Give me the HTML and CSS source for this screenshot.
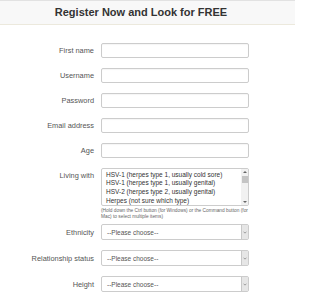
FILE: index.html
```html
<!DOCTYPE html>
<html lang="en">
<head>
<meta charset="utf-8">
<title>Register</title>
<link rel="stylesheet" href="styles.css">
</head>
<body>
<div class="page">
  <header class="head"><h1 class="title">Register Now and Look for FREE</h1></header>
  <form class="form">
    <div class="row"><label class="lbl">First name</label><input class="field" type="text"></div>
    <div class="row"><label class="lbl">Username</label><input class="field" type="text"></div>
    <div class="row"><label class="lbl">Password</label><input class="field" type="password"></div>
    <div class="row"><label class="lbl">Email address</label><input class="field" type="text"></div>
    <div class="row"><label class="lbl">Age</label><input class="field" type="text"></div>
    <div class="row row-top">
      <label class="lbl lbl-top">Living with</label>
      <div class="ctrl">
        <div class="listbox" role="listbox">
          <div class="opts">
            <div class="opt">HSV-1 (herpes type 1, usually cold sore)</div>
            <div class="opt">HSV-1 (herpes type 1, usually genital)</div>
            <div class="opt">HSV-2 (herpes type 2, usually genital)</div>
            <div class="opt">Herpes (not sure which type)</div>
          </div>
          <div class="sbar">
            <span class="sarrow up"></span>
            <span class="sthumb"></span>
            <span class="sfill"></span>
            <span class="sarrow down"></span>
          </div>
        </div>
        <p class="help">(Hold down the Ctrl button (for Windows) or the Command button (for Mac) to select multiple items)</p>
      </div>
    </div>
    <div class="row"><label class="lbl">Ethnicity</label><div class="sel"><span class="sel-text">--Please choose--</span><span class="sel-btn"><svg viewBox="0 0 6 4" width="4" height="3"><path d="M0.8 0.8 L3 3 L5.2 0.8" fill="none" stroke="#777" stroke-width="1"/></svg></span></div></div>
    <div class="row"><label class="lbl">Relationship status</label><div class="sel"><span class="sel-text">--Please choose--</span><span class="sel-btn"><svg viewBox="0 0 6 4" width="4" height="3"><path d="M0.8 0.8 L3 3 L5.2 0.8" fill="none" stroke="#777" stroke-width="1"/></svg></span></div></div>
    <div class="row"><label class="lbl">Height</label><div class="sel"><span class="sel-text">--Please choose--</span><span class="sel-btn"><svg viewBox="0 0 6 4" width="4" height="3"><path d="M0.8 0.8 L3 3 L5.2 0.8" fill="none" stroke="#777" stroke-width="1"/></svg></span></div></div>
  </form>
</div>
</body>
</html>
```

FILE: styles.css
```css
html, body {
  margin: 0;
  padding: 0;
  background: #fff;
  font-family: "Liberation Sans", Arial, sans-serif;
}
.page {
  width: 295px;
}
.head {
  border-top: 1px solid #e2e2e2;
  border-bottom: 1px solid #ece9dd;
  background: #f8f8f8;
  height: 23px;
  padding-right: 13px;
  display: flex;
  align-items: center;
  justify-content: center;
}
.title {
  margin: 0;
  font-size: 11px;
  font-weight: bold;
  color: #333;
  line-height: 13px;
}
.form {
  display: flex;
  flex-direction: column;
  padding-top: 18px;
  gap: 10px;
}
.row {
  display: grid;
  grid-template-columns: 94px 148px;
  column-gap: 7px;
  align-items: center;
}
.row-top {
  align-items: start;
  margin-bottom: -6px;
}
.lbl {
  text-align: right;
  font-size: 7.4px;
  color: #555;
  line-height: 9px;
}
.lbl-top {
  padding-top: 3px;
}
.field {
  box-sizing: border-box;
  height: 15px;
  width: 148px;
  margin: 0;
  border: 1px solid #ccc;
  border-radius: 2px;
  background: #fff;
  padding: 0 4px;
  box-shadow: inset 0 1px 1px rgba(0,0,0,0.04);
}
.ctrl {
  display: flex;
  flex-direction: column;
}
.listbox {
  box-sizing: border-box;
  height: 38px;
  border: 1px solid #ccc;
  border-radius: 2px;
  display: flex;
  overflow: hidden;
}
.opts {
  flex: 1;
  padding: 1.5px 0 0 4px;
}
.opt {
  font-size: 6.5px;
  line-height: 8.7px;
  color: #333;
  white-space: nowrap;
}
.sbar {
  width: 7px;
  background: #f1f1f1;
  display: flex;
  flex-direction: column;
  align-items: center;
}
.sarrow {
  width: 0;
  height: 0;
  border-left: 2px solid transparent;
  border-right: 2px solid transparent;
  margin: 2px 0;
}
.sarrow.up {
  border-bottom: 2px solid #666;
}
.sarrow.down {
  border-top: 2px solid #666;
}
.sthumb {
  width: 6px;
  height: 7px;
  background: #c4c4c4;
  margin-top: 1px;
}
.sfill {
  flex: 1;
}
.help {
  margin: 2px 0 0;
  font-size: 4.8px;
  line-height: 6px;
  color: #666;
}
.sel {
  box-sizing: border-box;
  height: 16px;
  border: 1px solid #ccc;
  border-radius: 2px;
  display: flex;
  align-items: center;
  background: #fff;
}
.sel-text {
  flex: 1;
  padding-left: 5px;
  font-size: 6.5px;
  color: #555;
}
.sel-btn {
  box-sizing: border-box;
  width: 7px;
  height: 14px;
  background: #e6e6e6;
  border-left: 1px solid #c8c8c8;
  display: flex;
  align-items: center;
  justify-content: center;
}
```
